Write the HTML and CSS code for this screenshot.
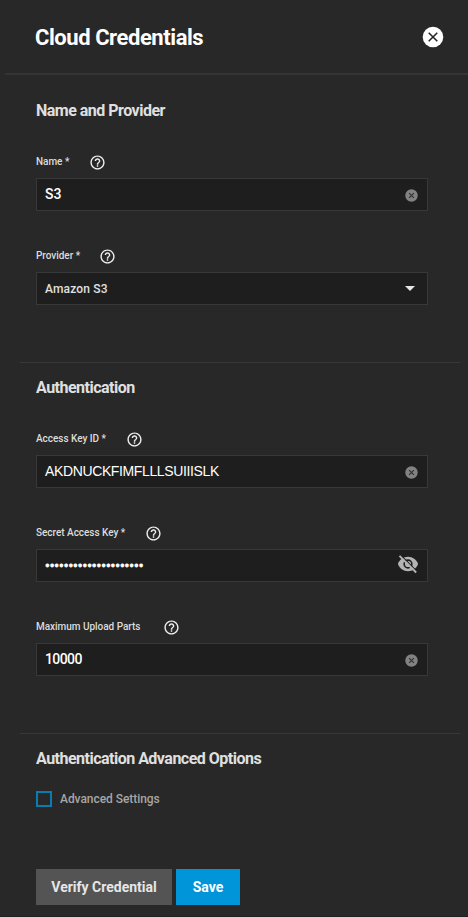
FILE: index.html
```
<!DOCTYPE html>
<html lang="en">
<head>
<meta charset="utf-8">
<title>Cloud Credentials</title>
<link rel="stylesheet" href="styles.css">
</head>
<body>
<svg class="defs" aria-hidden="true">
  <symbol id="help" viewBox="0 0 24 24"><path d="M11 18h2v-2h-2v2zm1-16C6.48 2 2 6.48 2 12s4.480 10 10 10 10-4.480 10-10S17.520 2 12 2zm0 18c-4.410 0-8-3.590-8-8s3.590-8 8-8 8 3.590 8 8-3.590 8-8 8zm0-14c-2.210 0-4 1.790-4 4h2c0-1.100.9-2 2-2s2 .9 2 2c0 2-3 1.750-3 5h2c0-2.250 3-2.500 3-5 0-2.210-1.790-4-4-4z"/></symbol>
  <symbol id="clear" viewBox="0 0 13 13"><circle cx="6.500" cy="6.500" r="6.200" fill="#828282"/><path d="M4.100 4.100l4.800 4.800M8.900 4.100l-4.800 4.800" stroke="#303030" stroke-width="1.100"/></symbol>
</svg>
<div class="panel">
  <header class="header">
    <h1 class="title">Cloud Credentials</h1>
    <svg class="close" viewBox="0 0 22 22"><circle cx="11" cy="11" r="10.300" fill="#fff"/><path d="M6.700 6.700l8.600 8.600M15.300 6.700l-8.600 8.600" stroke="#222" stroke-width="1.500"/></svg>
  </header>
  <section class="section first">
    <h2 class="heading h-name">Name and Provider</h2>
    <div class="field">
      <div class="label-row"><span class="label l-name">Name *</span><svg class="help"><use href="#help"/></svg></div>
      <div class="input"><span class="value v-name">S3</span><svg class="clear"><use href="#clear"/></svg></div>
    </div>
    <div class="field">
      <div class="label-row"><span class="label l-provider">Provider *</span><svg class="help"><use href="#help"/></svg></div>
      <div class="input"><span class="value select">Amazon S3</span><span class="arrow"></span></div>
    </div>
  </section>
  <section class="section auth">
    <h2 class="heading h-auth">Authentication</h2>
    <div class="field">
      <div class="label-row"><span class="label l-access">Access Key ID *</span><svg class="help"><use href="#help"/></svg></div>
      <div class="input"><span class="value key">AKDNUCKFIMFLLLSUIIISLK</span><svg class="clear"><use href="#clear"/></svg></div>
    </div>
    <div class="field">
      <div class="label-row"><span class="label l-secret">Secret Access Key *</span><svg class="help"><use href="#help"/></svg></div>
      <div class="input"><span class="value dots">•••••••••••••••••••••</span><svg class="eye" viewBox="0 0 24 24">
        <path fill="#b4b4b4" d="M12 4.200C7 4.200 2.700 7.300 1 12c1.700 4.700 6 7.800 11 7.800s9.300-3.100 11-7.800C21.300 7.300 17 4.200 12 4.200z"/>
        <circle cx="12" cy="12" r="4.200" fill="#b4b4b4" stroke="#1e1e1e" stroke-width="1.700"/>
        <path d="M4.100 2.300L22.400 20.600" stroke="#1e1e1e" stroke-width="1.300"/>
        <path d="M2.700 3.100L20.900 21.300" stroke="#b4b4b4" stroke-width="2.100"/>
      </svg></div>
    </div>
    <div class="field">
      <div class="label-row"><span class="label l-max">Maximum Upload Parts</span><svg class="help"><use href="#help"/></svg></div>
      <div class="input"><span class="value num">10000</span><svg class="clear"><use href="#clear"/></svg></div>
    </div>
  </section>
  <section class="section advanced">
    <h2 class="heading h-adv">Authentication Advanced Options</h2>
    <label class="check"><span class="box"></span><span class="check-text">Advanced Settings</span></label>
  </section>
  <div class="actions">
    <button class="btn verify"><span>Verify Credential</span></button>
    <button class="btn save"><span>Save</span></button>
  </div>
</div>
</body>
</html>
```
FILE: styles.css
```
* { box-sizing: border-box; }
body { margin: 0; background: #282828; font-family: Roboto, "Liberation Sans", sans-serif; color: #e0e0e0; }
.defs { position: absolute; width: 0; height: 0; }
.panel { height: 917px; overflow: hidden; border-bottom: 1px solid #211f20; }
.header { height: 75px; margin-left: 5px; padding: 1px 24px 0 30px; border-bottom: 2px solid #343434; display: flex; align-items: center; justify-content: space-between; }
.title { margin: 0; padding-top: 2px; font: 700 22px/28px Roboto, sans-serif; letter-spacing: -0.44px; color: #fff; white-space: nowrap; }
.close { width: 22px; height: 22px; }
.section { margin: 0 8px 0 20px; padding: 0 32px 0 16px; border-top: 1px solid #383838; }
.first { height: 287px; border-top: 0; padding-top: 26px; }
.auth { height: 371px; padding-top: 15px; }
.advanced { height: 136px; padding-top: 15px; }
.heading { margin: 0 0 33px; font: 700 16px/20px Roboto, sans-serif; letter-spacing: -0.51px; white-space: nowrap; color: #e0e0e0; }
.field { height: 94px; }
.label-row { display: flex; align-items: center; height: 16px; margin-bottom: 8px; }
.label { font-size: 10px; font-weight: 500; line-height: 16px; white-space: nowrap; flex: none; color: #dcdcdc; letter-spacing: -.03px; }
.l-name { width: 53px; }
.l-provider { width: 63px; }
.l-access { width: 89.5px; }
.l-secret { width: 108.5px; }
.l-max { width: 126.5px; }
.help { width: 17px; height: 17px; fill: #efefef; flex: none; }
.input { height: 33px; border: 1px solid #383838; background: #1e1e1e; padding: 0 9px 0 8px; display: flex; align-items: center; justify-content: space-between; }
.value { font-size: 14px; line-height: 31px; color: #fff; white-space: nowrap; }
.select { font-size: 12px; line-height: 31px; padding-top: 1px; color: #e0e0e0; letter-spacing: .15px; font-weight: 500; }
.key { font-family: "Liberation Sans", sans-serif; letter-spacing: -.37px; }
.num { font-weight: 500; letter-spacing: -.6px; }
.v-name { font-weight: 500; letter-spacing: -.1px; }
.dots { font-size: 14px; letter-spacing: -.04px; padding-top: 1px; -webkit-text-stroke: .8px #fff; }
.clear { width: 13px; height: 13px; margin-top: 2px; }
.arrow { width: 10px; height: 5px; margin-right: 3px; background: #e6e6e6; clip-path: polygon(0 0, 100% 0, 50% 100%); }
.eye { width: 22px; height: 22px; margin: -3px -1px 0 0; }
.advanced .heading { margin-bottom: 22px; }
.check { display: flex; align-items: center; height: 16px; gap: 8px; }
.box { width: 16px; height: 16px; border: 2px solid #0b7cb2; }
.check-text { font-size: 12px; font-weight: 500; letter-spacing: -.05px; line-height: 16px; color: #a6a6a6; white-space: nowrap; }
.actions { display: flex; gap: 4px; padding-left: 36px; }
.btn { height: 36px; border: 0; padding: 1px 0 0; font: 700 14px/35px Roboto, sans-serif; letter-spacing: 0; color: #e6e6e6; white-space: nowrap; }
.verify { width: 136px; background: #545454; }
.save { width: 64px; background: #0095d9; color: #fff; }
```
